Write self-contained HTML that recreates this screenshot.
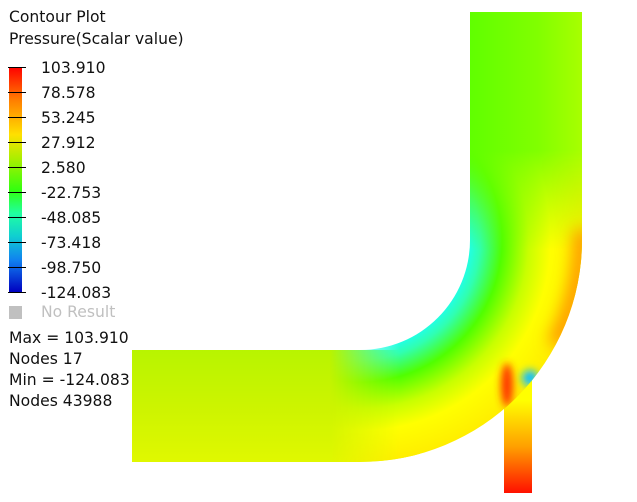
<!DOCTYPE html>
<html><head><meta charset="utf-8"><style>
body{margin:0;width:637px;height:502px;background:#fff;overflow:hidden;position:relative;font-family:"DejaVu Sans","Liberation Sans",sans-serif;color:#111}
.t{position:absolute;font-size:15.6px;line-height:18px;white-space:nowrap}
</style></head><body>
<svg width="637" height="502" style="position:absolute;left:0;top:0">
<defs>
<linearGradient id="cb" x1="0" y1="0" x2="0" y2="1">
<stop offset="0" stop-color="#ff0000"/><stop offset="0.15" stop-color="#ff8000"/><stop offset="0.3" stop-color="#ffe000"/><stop offset="0.42" stop-color="#a0f000"/><stop offset="0.55" stop-color="#30ff10"/><stop offset="0.65" stop-color="#20ffa0"/><stop offset="0.75" stop-color="#10d0d0"/><stop offset="0.86" stop-color="#1080f0"/><stop offset="1" stop-color="#0000c0"/></linearGradient>
<linearGradient id="vp" x1="470" y1="0" x2="582" y2="0" gradientUnits="userSpaceOnUse"><stop offset="0" stop-color="#60ff00"/><stop offset="0.6" stop-color="#80ff00"/><stop offset="1" stop-color="#a8ff00"/></linearGradient>
<linearGradient id="hp" x1="0" y1="350" x2="0" y2="462" gradientUnits="userSpaceOnUse"><stop offset="0" stop-color="#b8f400"/><stop offset="0.5" stop-color="#ccf400"/><stop offset="1" stop-color="#e0f800"/></linearGradient>
<radialGradient id="el" cx="360" cy="240" r="222" gradientUnits="userSpaceOnUse">
<stop offset="0.49" stop-color="#20ffe8"/><stop offset="0.54" stop-color="#30ffb0"/><stop offset="0.64" stop-color="#50ff00"/><stop offset="0.76" stop-color="#c8ff00"/><stop offset="0.86" stop-color="#ffff00"/><stop offset="1" stop-color="#ffee00"/></radialGradient>
<linearGradient id="out" x1="0" y1="400" x2="0" y2="493" gradientUnits="userSpaceOnUse"><stop offset="0" stop-color="#ffff00"/><stop offset="0.5" stop-color="#ffa000"/><stop offset="1" stop-color="#ff1000"/></linearGradient>
<linearGradient id="mx" x1="330" y1="0" x2="400" y2="0" gradientUnits="userSpaceOnUse"><stop offset="0" stop-color="#000"/><stop offset="1" stop-color="#fff"/></linearGradient>
<linearGradient id="my" x1="0" y1="150" x2="0" y2="250" gradientUnits="userSpaceOnUse"><stop offset="0" stop-color="#000"/><stop offset="1" stop-color="#fff"/></linearGradient>
<mask id="mX" maskUnits="userSpaceOnUse" x="0" y="0" width="637" height="502"><rect x="0" y="0" width="637" height="502" fill="url(#mx)"/></mask>
<mask id="mY" maskUnits="userSpaceOnUse" x="0" y="0" width="637" height="502"><rect x="0" y="0" width="637" height="502" fill="url(#my)"/></mask>
<clipPath id="pipe"><path d="M470 12 H582 V240 A222 222 0 0 1 360 462 H132 V350 H360 A110 110 0 0 0 470 240 Z"/></clipPath>
<filter id="b" x="-200%" y="-100%" width="500%" height="300%"><feGaussianBlur stdDeviation="8"/></filter>
<filter id="b2" x="-200%" y="-100%" width="500%" height="300%"><feGaussianBlur stdDeviation="4"/></filter>
</defs>
<rect x="9" y="67" width="13" height="225" fill="url(#cb)"/>
<g stroke="#000" stroke-width="1">
<line x1="8" y1="67.5" x2="26" y2="67.5"/><line x1="8" y1="92.5" x2="26" y2="92.5"/><line x1="8" y1="117.5" x2="26" y2="117.5"/><line x1="8" y1="142.5" x2="26" y2="142.5"/><line x1="8" y1="167.5" x2="26" y2="167.5"/><line x1="8" y1="192.5" x2="26" y2="192.5"/><line x1="8" y1="217.5" x2="26" y2="217.5"/><line x1="8" y1="242.5" x2="26" y2="242.5"/><line x1="8" y1="267.5" x2="26" y2="267.5"/><line x1="8" y1="292.5" x2="26" y2="292.5"/></g>
<rect x="9" y="306" width="13" height="13" fill="#c0c0c0"/>
<rect x="504" y="378" width="28" height="115" fill="url(#out)"/>
<g clip-path="url(#pipe)">
<rect x="470" y="0" width="112" height="300" fill="url(#vp)"/>
<rect x="120" y="350" width="300" height="112" fill="url(#hp)"/>
<g mask="url(#mX)"><g mask="url(#mY)">
<rect x="300" y="140" width="282" height="322" fill="url(#el)"/>
</g></g>
<path d="M582 230 A222 222 0 0 1 555 345" stroke="#ff9000" stroke-width="16" fill="none" filter="url(#b)"/>
<ellipse cx="507" cy="385" rx="6" ry="22" fill="#ff3000" filter="url(#b2)"/>
<circle cx="530" cy="378" r="8" fill="#10c0ff" filter="url(#b2)"/>
</g>
</svg>
<div class="t" style="left:9px;top:8px">Contour Plot</div>
<div class="t" style="left:9px;top:30px">Pressure(Scalar value)</div>
<div class="t" style="left:41px;top:59px">103.910</div>
<div class="t" style="left:41px;top:84px">78.578</div>
<div class="t" style="left:41px;top:109px">53.245</div>
<div class="t" style="left:41px;top:134px">27.912</div>
<div class="t" style="left:41px;top:159px">2.580</div>
<div class="t" style="left:41px;top:184px">-22.753</div>
<div class="t" style="left:41px;top:209px">-48.085</div>
<div class="t" style="left:41px;top:234px">-73.418</div>
<div class="t" style="left:41px;top:259px">-98.750</div>
<div class="t" style="left:41px;top:284px">-124.083</div>
<div class="t" style="left:41px;top:303px;color:#c0c0c0">No Result</div>
<div class="t" style="left:9px;top:329px">Max = 103.910</div>
<div class="t" style="left:9px;top:350px">Nodes 17</div>
<div class="t" style="left:9px;top:371px">Min = -124.083</div>
<div class="t" style="left:9px;top:392px">Nodes 43988</div>
</body></html>
